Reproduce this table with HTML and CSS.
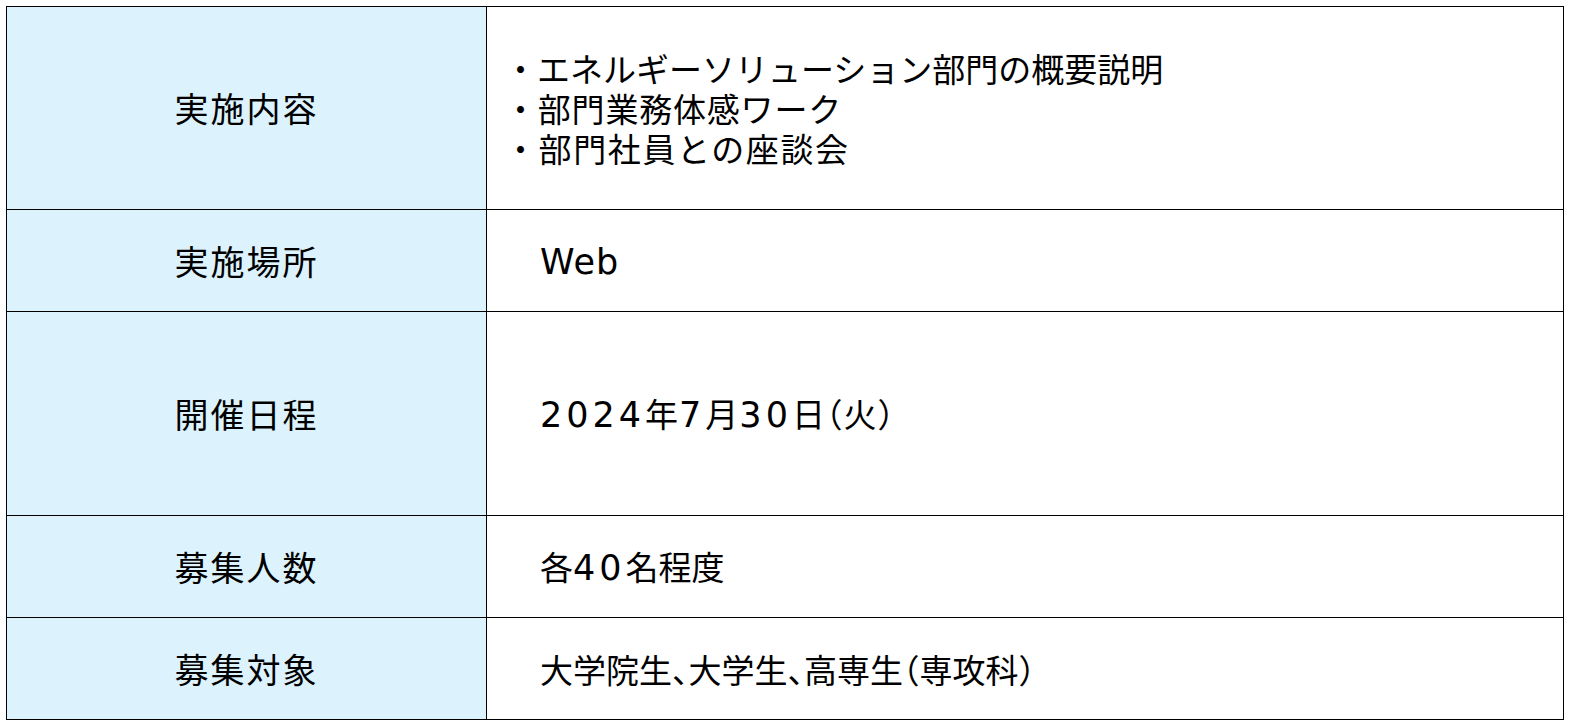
FILE: index.html
```html
<!DOCTYPE html>
<html lang="ja">
<head>
<meta charset="utf-8">
<title>実施概要</title>
<link rel="stylesheet" href="styles.css">
</head>
<body>
<table class="info">
  <tr class="row-tall">
    <th class="label">実施内容</th>
    <td class="value value-list">
      <div class="line">・エネルギーソリューション部門の概要説明</div>
      <div class="line wide">・部門業務体感ワーク</div>
      <div class="line wide2">・部門社員との座談会</div>
    </td>
  </tr>
  <tr class="row-short">
    <th class="label">実施場所</th>
    <td class="value"><span class="latin">Web</span></td>
  </tr>
  <tr class="row-tall2">
    <th class="label">開催日程</th>
    <td class="value date"><span class="num">2024</span>年<span class="num">7</span>月<span class="num">30</span>日<span class="punct">（</span>火<span class="punct">）</span></td>
  </tr>
  <tr class="row-short">
    <th class="label">募集人数</th>
    <td class="value">各<span class="num">40</span>名程度</td>
  </tr>
  <tr class="row-short">
    <th class="label">募集対象</th>
    <td class="value">大学院生<span class="punct">、</span>大学生<span class="punct">、</span>高専生<span class="punct">（</span>専攻科<span class="punct">）</span></td>
  </tr>
</table>
</body>
</html>
```
FILE: styles.css
```css
html, body {
  margin: 0;
  padding: 0;
  background: #ffffff;
}
body {
  padding: 6px;
  font-family: "Noto Sans CJK JP", "Noto Sans", sans-serif;
  color: #000000;
}
.info {
  border-collapse: collapse;
  width: 1558px;
  table-layout: fixed;
}
.info th, .info td {
  border: 1px solid #000000;
  vertical-align: middle;
  padding: 0;
  font-size: 33px;
  line-height: 40px;
  font-weight: 400;
}
.info th.label {
  width: 479px;
  background: #dcf2fd;
  text-align: center;
  font-size: 34px;
  letter-spacing: 2px;
}
.value {
  text-align: left;
  padding-left: 53px !important;
  background: #ffffff;
}
.value-list {
  padding-left: 17px !important;
}
.line.wide { letter-spacing: 0.8px; }
.line.wide2 { letter-spacing: 1.6px; }
.date { letter-spacing: 1px; }
.row-tall { height: 203px; }
.row-tall2 { height: 204px; }
.row-short { height: 102px; }
.punct {
  font-feature-settings: "halt";
}
.latin, .num {
  font-family: "DejaVu Sans", "Noto Sans", sans-serif;
  font-size: 35px;
}
.latin {
  letter-spacing: 1px;
}
.num {
  letter-spacing: 4px;
}
```
